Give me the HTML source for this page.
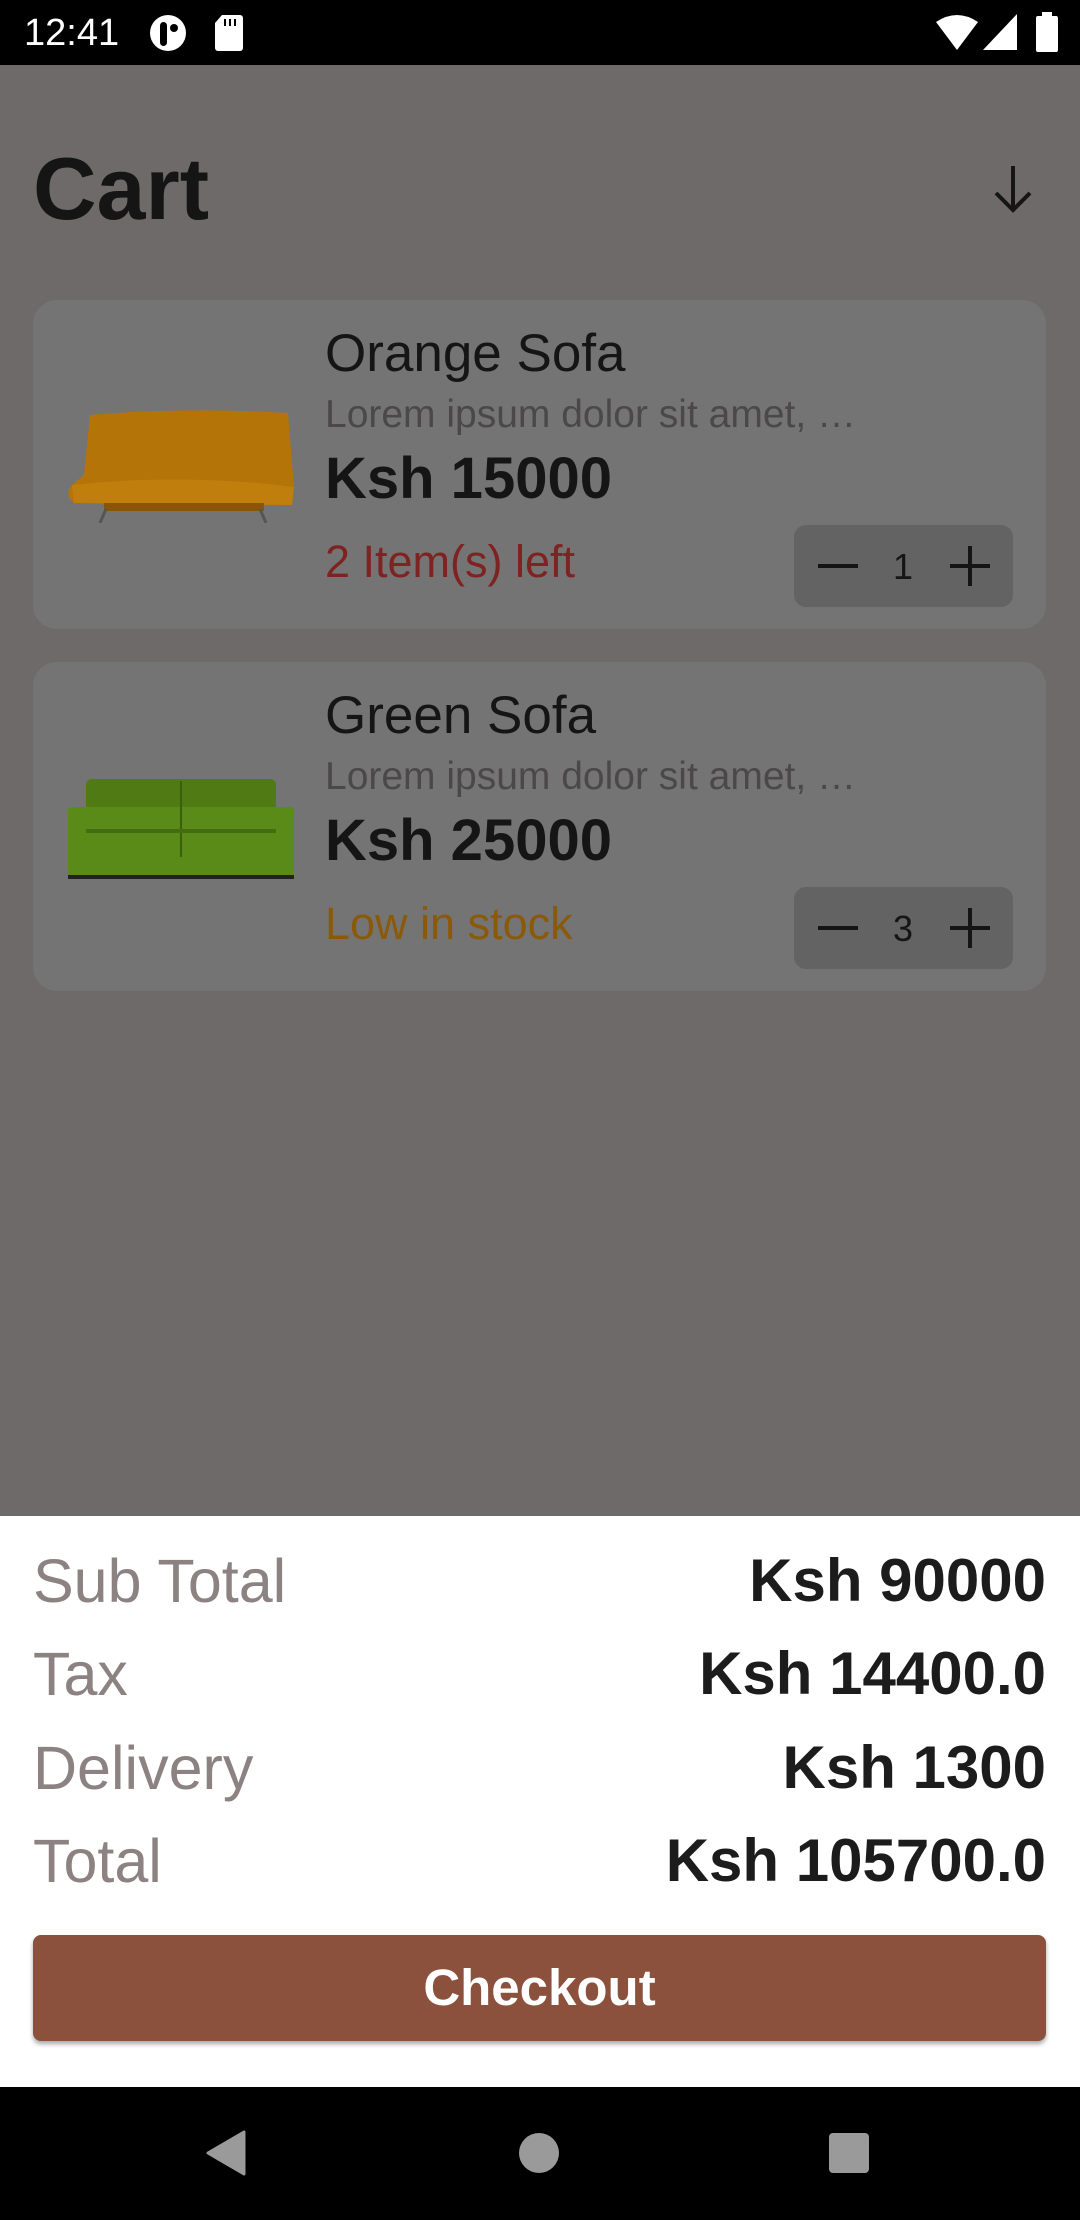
<!DOCTYPE html>
<html><head><meta charset="utf-8"><style>
*{margin:0;padding:0;box-sizing:border-box}
body{width:1080px;height:2220px;background:#6e6a6a;position:relative;overflow:hidden;font-family:"Liberation Sans",sans-serif;color:#151515}
.a{position:absolute;line-height:1;white-space:nowrap}
.card{position:absolute;left:33px;width:1013px;height:329px;background:#757474;border-radius:24px}
.step{position:absolute;left:794px;width:219px;height:82px;background:#636363;border-radius:12px}
</style></head><body>
<div class="a" style="left:0;top:0;width:1080px;height:65px;background:#000"></div>
<div class="a" style="left:24px;top:14px;font-size:38px;color:#fff">12:41</div>
<svg class="a" style="left:148px;top:14px" width="40" height="38" viewBox="0 0 40 38"><ellipse cx="20" cy="19" rx="18" ry="18" fill="#fff"/><rect x="12" y="8" width="7" height="24" rx="3.5" fill="#000"/><circle cx="26" cy="14" r="4" fill="#000"/></svg>
<svg class="a" style="left:214px;top:15px" width="30" height="36" viewBox="0 0 30 36"><path d="M8 0H26a3 3 0 0 1 3 3V33a3 3 0 0 1-3 3H4a3 3 0 0 1-3-3V8Z" fill="#fff"/><rect x="10" y="4" width="2" height="7" fill="#000"/><rect x="15" y="4" width="2" height="7" fill="#000"/><rect x="20" y="4" width="2" height="7" fill="#000"/></svg>
<svg class="a" style="left:936px;top:14px" width="42" height="36" viewBox="0 0 42 36"><path d="M0 8Q21-6 42 8L21 36Z" fill="#fff"/></svg>
<svg class="a" style="left:983px;top:14px" width="34" height="36" viewBox="0 0 34 36"><path d="M34 0V36H0Z" fill="#fff"/></svg>
<svg class="a" style="left:1036px;top:12px" width="22" height="40" viewBox="0 0 22 40"><rect x="6" y="0" width="10" height="5" fill="#fff"/><rect x="0" y="4" width="22" height="36" rx="2" fill="#fff"/></svg>

<div class="a" style="left:33px;top:145px;font-size:88px;font-weight:bold">Cart</div>
<svg class="a" style="left:990px;top:164px" width="46" height="50" viewBox="0 0 46 50"><path d="M23 2V46M6 29L23 46L40 29" stroke="#151515" stroke-width="4" fill="none"/></svg>

<div class="card" style="top:300px"></div>
<svg class="a" style="left:64px;top:405px" width="234" height="118" viewBox="0 0 234 118"><path d="M26 10Q120 2 224 8L228 60Q232 90 226 100L10 98Q0 90 8 80L20 70Z" fill="#b57408"/><path d="M8 80Q120 68 230 82L228 100L10 98Z" fill="#c07f0c"/><rect x="40" y="98" width="160" height="8" fill="#8a5606"/><path d="M42 104L36 118M196 104L202 118" stroke="#555" stroke-width="3"/></svg>
<div class="a" style="left:325px;top:327px;font-size:53px">Orange Sofa</div>
<div class="a" style="left:325px;top:395px;font-size:39px;color:#4a4848">Lorem ipsum dolor sit amet, …</div>
<div class="a" style="left:325px;top:450px;font-size:58px;font-weight:bold">Ksh 15000</div>
<div class="a" style="left:325px;top:539px;font-size:45px;color:#7e2222">2 Item(s) left</div>
<div class="step" style="top:525px"></div>
<div class="a" style="left:818px;top:564px;width:40px;height:4px;background:#151515"></div>
<div class="a" style="left:893px;top:549px;font-size:36px">1</div>
<div class="a" style="left:950px;top:564px;width:40px;height:4px;background:#151515"></div>
<div class="a" style="left:968px;top:546px;width:4px;height:40px;background:#151515"></div>

<div class="card" style="top:662px"></div>
<svg class="a" style="left:66px;top:777px" width="230" height="102" viewBox="0 0 230 102"><rect x="20" y="2" width="190" height="80" rx="6" fill="#4f7a14"/><rect x="2" y="30" width="226" height="70" rx="4" fill="#5a8a18"/><path d="M115 4V80" stroke="#3c5f0c" stroke-width="2"/><rect x="20" y="52" width="190" height="4" fill="#456c10"/><rect x="2" y="98" width="226" height="4" fill="#222"/></svg>
<div class="a" style="left:325px;top:689px;font-size:53px">Green Sofa</div>
<div class="a" style="left:325px;top:757px;font-size:39px;color:#4a4848">Lorem ipsum dolor sit amet, …</div>
<div class="a" style="left:325px;top:812px;font-size:58px;font-weight:bold">Ksh 25000</div>
<div class="a" style="left:325px;top:901px;font-size:45px;color:#8a5a08">Low in stock</div>
<div class="step" style="top:887px"></div>
<div class="a" style="left:818px;top:926px;width:40px;height:4px;background:#151515"></div>
<div class="a" style="left:893px;top:911px;font-size:36px">3</div>
<div class="a" style="left:950px;top:926px;width:40px;height:4px;background:#151515"></div>
<div class="a" style="left:968px;top:908px;width:4px;height:40px;background:#151515"></div>

<div class="a" style="left:0;top:1516px;width:1080px;height:571px;background:#fff"></div>
<div class="a" style="left:33px;top:1551px;font-size:61px;color:#8c8282">Sub Total</div>
<div class="a" style="right:34px;top:1551px;font-size:60px;font-weight:bold;color:#1c1c1c">Ksh 90000</div>
<div class="a" style="left:33px;top:1644px;font-size:61px;color:#8c8282">Tax</div>
<div class="a" style="right:34px;top:1644px;font-size:60px;font-weight:bold;color:#1c1c1c">Ksh 14400.0</div>
<div class="a" style="left:33px;top:1738px;font-size:61px;color:#8c8282">Delivery</div>
<div class="a" style="right:34px;top:1738px;font-size:60px;font-weight:bold;color:#1c1c1c">Ksh 1300</div>
<div class="a" style="left:33px;top:1831px;font-size:61px;color:#8c8282">Total</div>
<div class="a" style="right:34px;top:1831px;font-size:60px;font-weight:bold;color:#1c1c1c">Ksh 105700.0</div>
<div class="a" style="left:33px;top:1935px;width:1013px;height:106px;background:#8b513c;border-radius:8px;box-shadow:0 3px 5px rgba(0,0,0,.35);color:#fff;font-size:51px;font-weight:bold;text-align:center;line-height:106px">Checkout</div>

<div class="a" style="left:0;top:2087px;width:1080px;height:133px;background:#000"></div>
<svg class="a" style="left:204px;top:2130px" width="44" height="46" viewBox="0 0 44 46"><path d="M40 2V44L4 23Z" fill="#9a9a9a" stroke="#9a9a9a" stroke-width="3" stroke-linejoin="round"/></svg>
<div class="a" style="left:519px;top:2133px;width:40px;height:40px;border-radius:50%;background:#9a9a9a"></div>
<div class="a" style="left:829px;top:2133px;width:40px;height:40px;border-radius:4px;background:#9a9a9a"></div>
</body></html>
